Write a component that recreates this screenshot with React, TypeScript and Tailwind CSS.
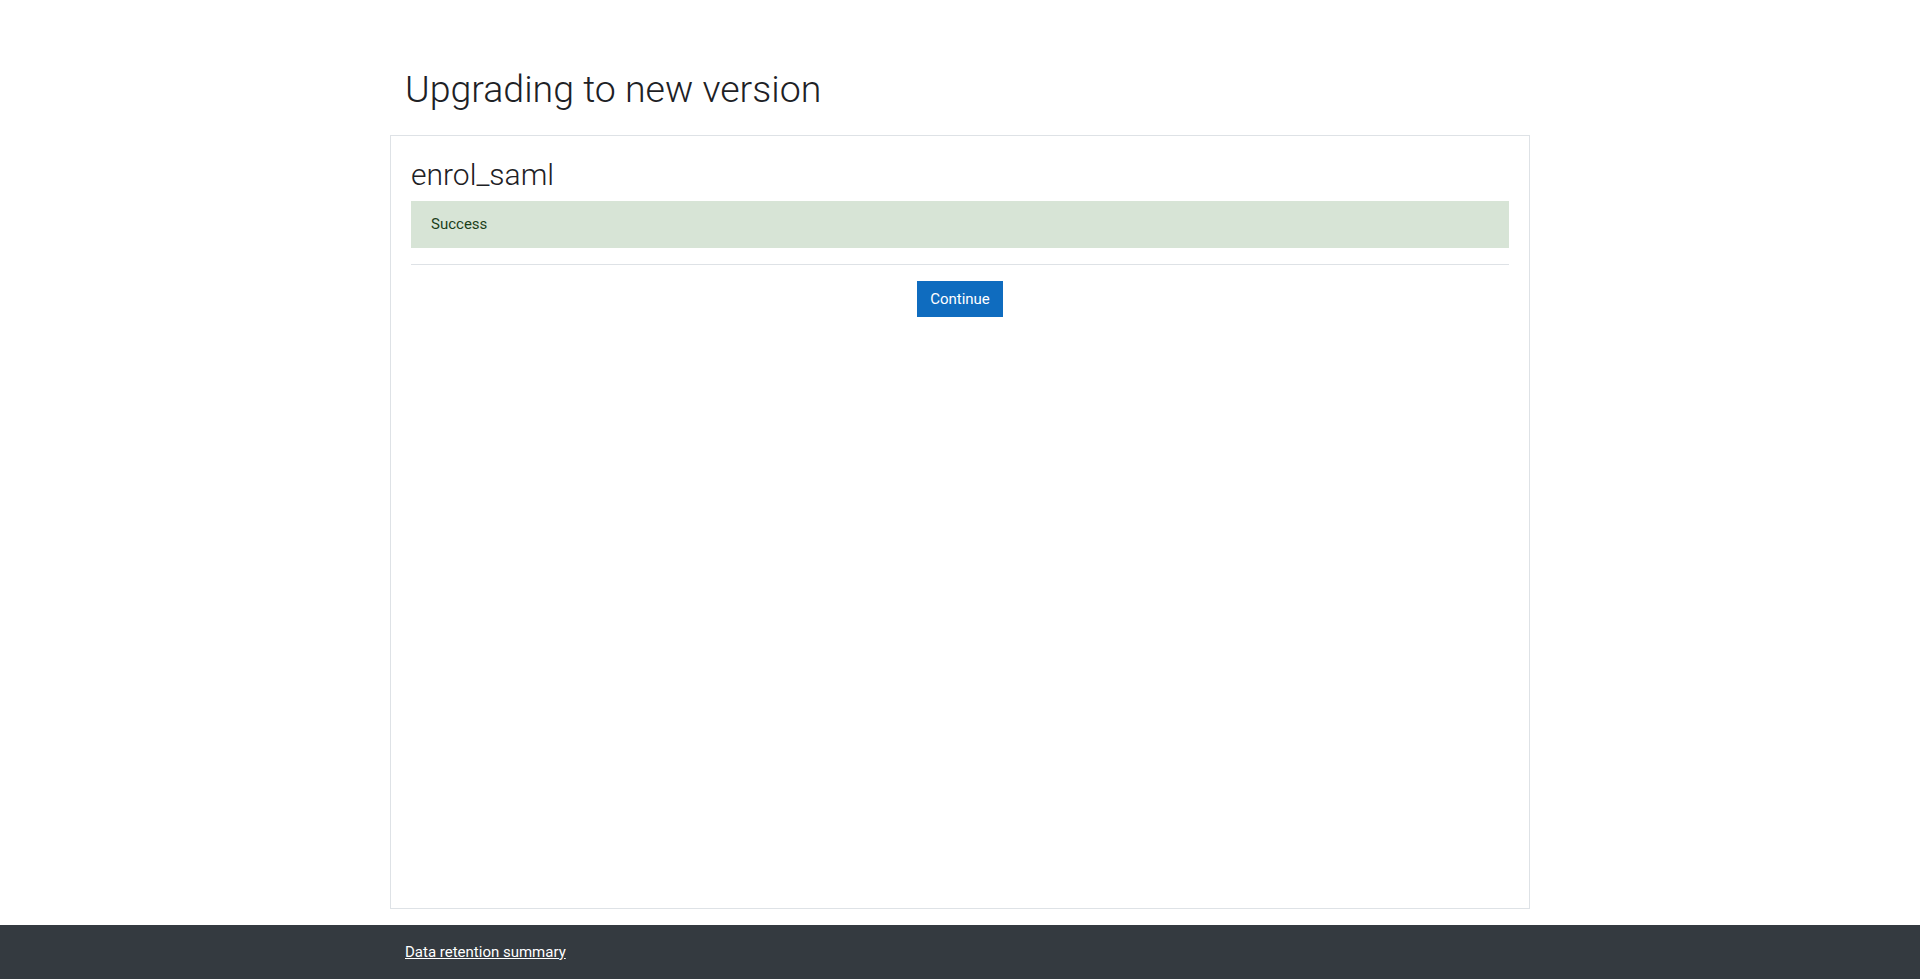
import React from 'react';

export default function App() {
  return (
    <div className="flex min-h-screen flex-col bg-white text-[#1d2125]" style={{ fontFamily: 'Roboto, "Liberation Sans", sans-serif' }}>
      {/* Page content */}
      <main className="mx-auto flex w-[1140px] flex-1 flex-col">
        <h2 className="mt-[67px] mb-[23px] px-[15px] text-[37.5px] font-light leading-[1.2]">
          Upgrading to new version
        </h2>

        <div className="mb-4 flex flex-1 flex-col border border-[#dee2e6] px-5 pt-[21px] pb-5">
          <h3 className="mb-[8px] text-[30px] font-light leading-[1.2]">enrol_saml</h3>
          <div className="bg-[#d7e4d6] px-5 py-3 text-[15px] leading-[1.5] text-[#1c3f1a]">Success</div>
          <hr className="my-4 border-t border-[#dee2e6]" />
          <div className="flex justify-center">
            <button className="border border-[#0f6cbf] bg-[#0f6cbf] px-3 py-1.5 text-[15px] leading-[1.5] text-white">
              Continue
            </button>
          </div>
        </div>
      </main>

      {/* Footer */}
      <footer className="bg-[#343a40] py-4">
        <div className="mx-auto w-[1140px] px-[15px] text-[15px] leading-[1.5]">
          <a href="#" className="text-white underline">
            Data retention summary
          </a>
        </div>
      </footer>
    </div>
  );
}
